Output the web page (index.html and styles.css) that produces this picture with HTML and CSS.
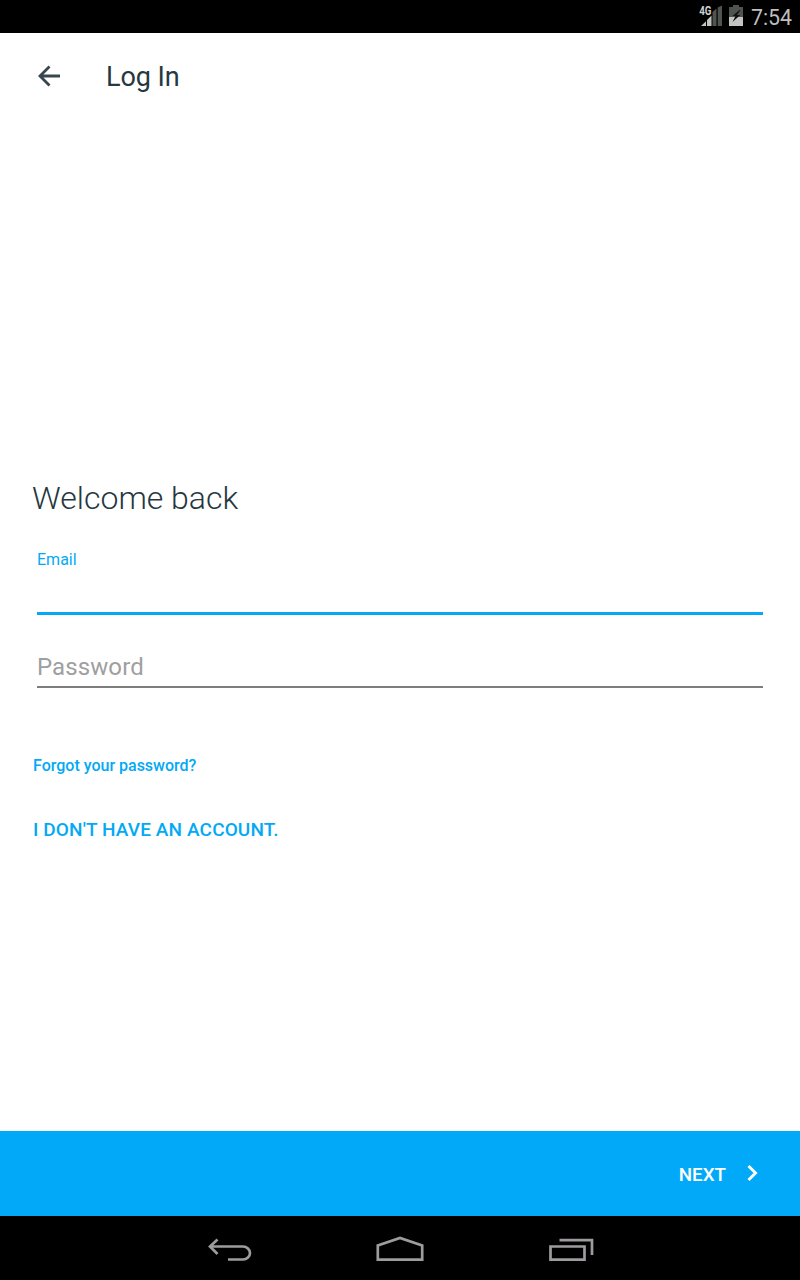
FILE: index.html
```html
<!DOCTYPE html>
<html lang="en">
<head>
<meta charset="utf-8">
<title>Log In</title>
<link rel="stylesheet" href="styles.css">
</head>
<body>
<div class="screen">
  <div class="status">
    <svg class="signal" width="24" height="24" viewBox="698 4 24 24">
      <path fill="#505451" d="M712.500 12l4-3.500V26h-4zM717.700 7.500L722 5.500V26h-4.300z"/>
      <path fill="#c3c5c3" d="M701 26l5-4.700V26zM707 20l4.500-4.500V26H707z"/>
      <text class="network" transform="translate(699.200 15.300) scale(.75 1)" x="0" y="0">4G</text>
    </svg>
    <svg class="battery" width="14" height="22" viewBox="729 5 14 22">
      <path fill="#505451" d="M733 5h6v2h4v10h-14V7h4z"/>
      <path fill="#c3c5c3" d="M729 17h14v9h-14z"/>
      <path fill="#101410" d="M739.500 10l-7 6h3l-3 6 7.800-7h-3.300l3.500-5z"/>
    </svg>
    <span class="clock">7:54</span>
  </div>
  <header class="appbar">
    <svg class="back" width="24" height="24" viewBox="0 0 24 24"><path d="M23 12H3M12.500 2.500L3 12l9.500 9.500"/></svg>
    <h1 class="title">Log In</h1>
  </header>
  <main class="content">
    <h2 class="welcome">Welcome back</h2>
    <div class="email"><label class="email-label">Email</label></div>
    <div class="password"><span class="hint">Password</span></div>
    <a class="forgot">Forgot your password?</a>
    <a class="signup">I DON'T HAVE AN ACCOUNT.</a>
  </main>
  <footer class="next-bar">
    <span class="next">NEXT</span>
    <svg class="chevron" width="14" height="18" viewBox="0 0 14 18"><path d="M2.500 2l7 7-7 7"/></svg>
  </footer>
  <nav class="navbar">
    <svg width="48" height="32" viewBox="206 1234 48 32"><path d="M210 1246.500h33a7 6.500 0 0 1 0 13H228M217.500 1239.500l-7.500 7 7.500 7.500"/></svg>
    <svg width="52" height="32" viewBox="375 1234 52 32"><path d="M377.800 1259.600V1245.500L400 1238l22.200 7.500v14.100z"/></svg>
    <svg width="48" height="32" viewBox="547 1234 48 32"><path d="M550.500 1246.500h34v13.200h-34zM559.500 1240.200h32.500V1255"/></svg>
  </nav>
</div>
</body>
</html>
```
FILE: styles.css
```css
body { margin: 0; font-family: Roboto, sans-serif; }
.screen { width: 800px; height: 1280px; display: flex; flex-direction: column; background: #fff; }
.status { height: 33px; box-sizing: border-box; padding: 4px 8px 0 0; background: #000; display: flex; justify-content: flex-end; align-items: flex-start; }
.signal { margin-right: 7px; }
.battery { margin: 1px 8px 0 0; }
.network { font: 700 13px Roboto, sans-serif; fill: #d0d2d0; }
.clock { font-size: 21.300px; line-height: 28px; color: #bebebe; }
.appbar { height: 86px; display: flex; align-items: center; padding-left: 37px; color: #263740; }
.back { fill: none; stroke: #37474f; stroke-width: 2.800px; }
.title { margin: 2px 0 0 45px; font-size: 27px; line-height: 32px; font-weight: 400; letter-spacing: -0.100px; }
.content { flex: 1; display: flex; flex-direction: column; align-items: flex-start; padding: 359px 37px 0 33px; }
.welcome { margin: 0 0 0 -1px; font-size: 32px; line-height: 40px; font-weight: 300; color: #263740; }
.email { box-sizing: border-box; width: 726px; height: 65px; margin: 32px 0 0 4px; border-bottom: 3px solid #03a9f4; }
.email-label { display: block; font-size: 16px; line-height: 20px; color: #03a9f4; }
.password { box-sizing: border-box; width: 726px; height: 73px; margin-left: 4px; padding-top: 37px; border-bottom: 2px solid #7d7d7d; }
.hint { display: block; font-size: 24px; line-height: 30px; color: #9f9f9f; letter-spacing: 0.100px; }
.forgot, .signup { font-weight: 500; color: #03a9f4; }
.forgot { margin-top: 68px; font-size: 16px; line-height: 20px; }
.signup { margin-top: 42px; font-size: 19px; line-height: 24px; letter-spacing: 0.120px; }
.next-bar { height: 85px; box-sizing: border-box; padding: 1px 40px 0 0; display: flex; align-items: center; justify-content: flex-end; background: #03a9f9; color: #fff; }
.next { margin: 2px 20px 0 0; font-size: 18.800px; line-height: 24px; font-weight: 500; }
.chevron { fill: none; stroke: #fff; stroke-width: 2.900px; margin-bottom: 2px; }
.navbar { height: 64px; box-sizing: border-box; padding: 18px 205px 0 206px; display: flex; justify-content: space-between; background: #000; }
.navbar svg { fill: none; stroke: #9d9b9d; stroke-width: 2.700px; }
```
